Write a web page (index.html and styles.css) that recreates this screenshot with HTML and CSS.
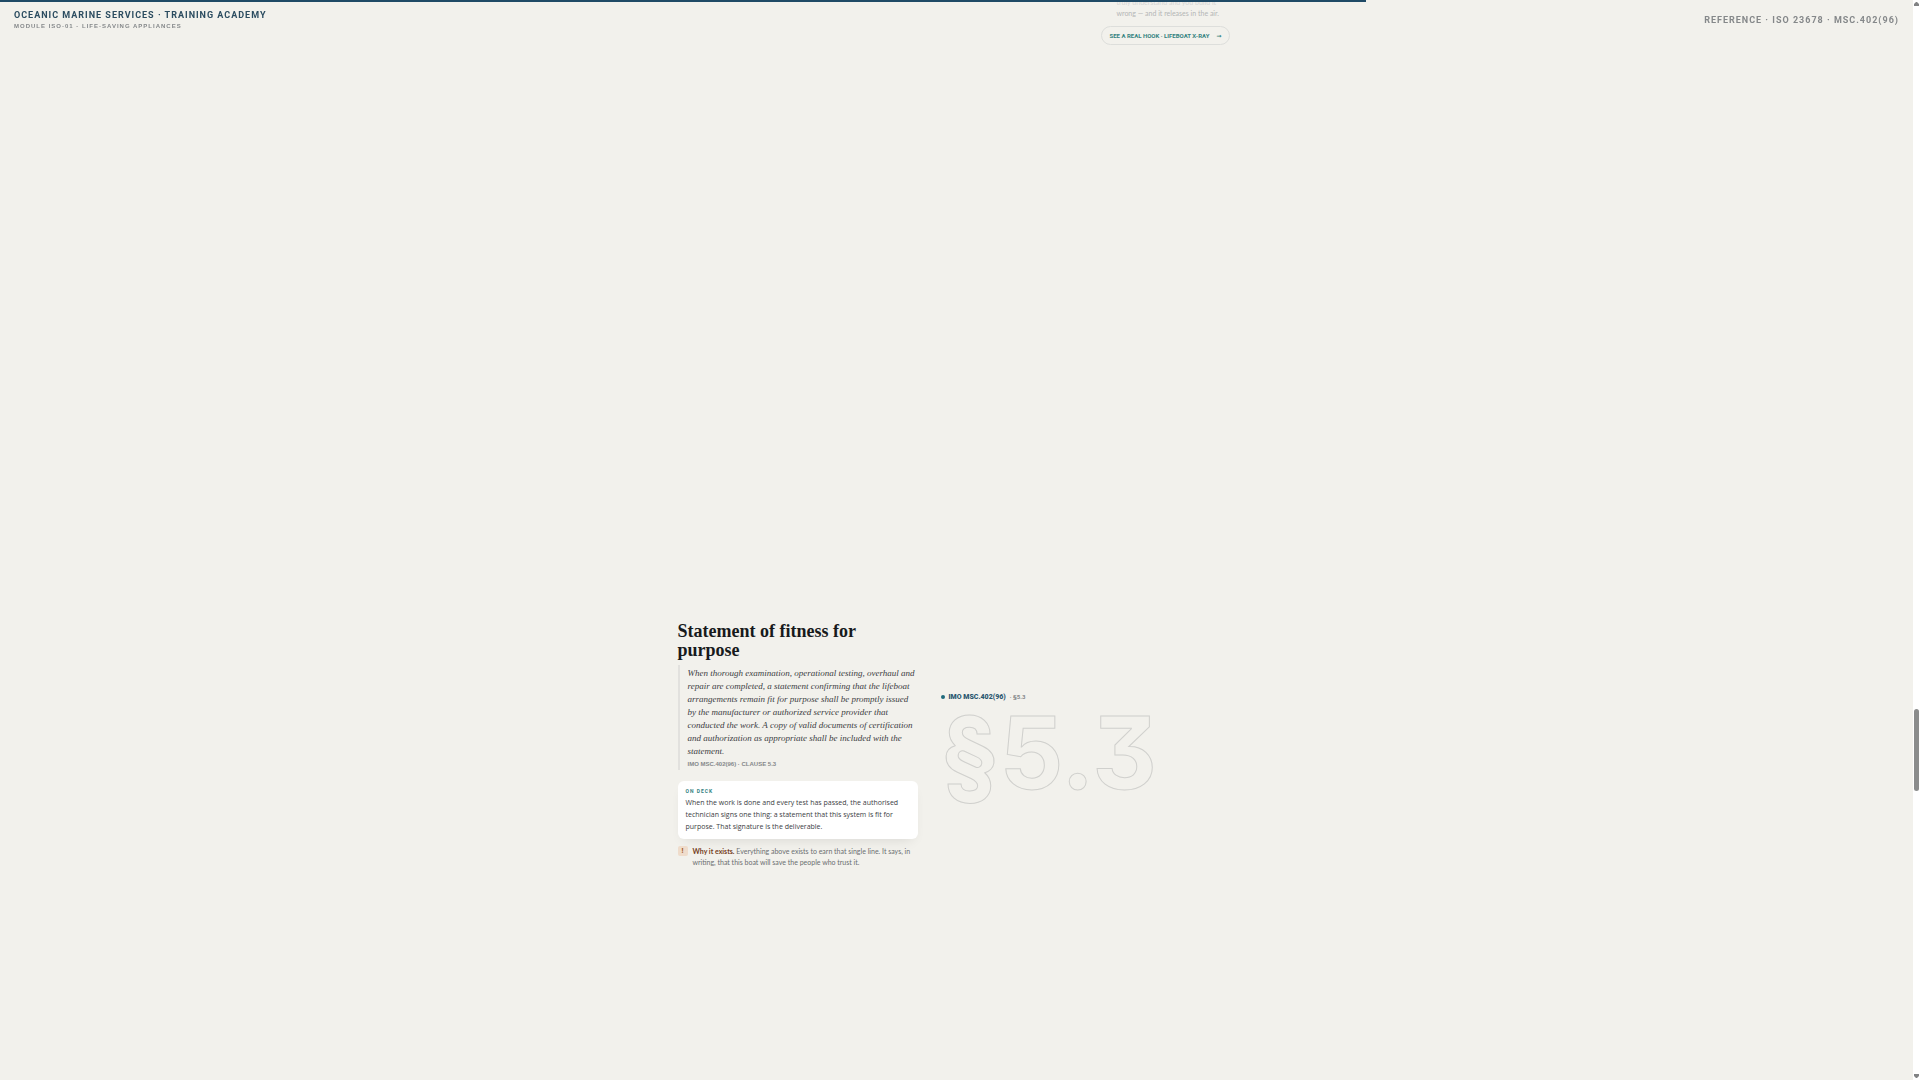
FILE: index.html
```html
<!DOCTYPE html>
<html lang="en">
<head>
<meta charset="utf-8">
<title>Oceanic Marine Services · Training Academy</title>
<link rel="stylesheet" href="styles.css">
</head>
<body>
<div class="progress"><div class="progress-fill"></div></div>
<header class="masthead">
  <div class="brand">
    <p class="brand-name">OCEANIC MARINE SERVICES · TRAINING ACADEMY</p>
    <p class="brand-module">MODULE ISO-01 · LIFE-SAVING APPLIANCES</p>
  </div>
  <p class="reference">REFERENCE · ISO 23678 · MSC.402(96)</p>
</header>
<main class="page">
  <section class="previous">
    <p class="previous-note"><span class="faded">truly understand and you build it</span><br>wrong — and it releases in the air.</p>
    <a class="pill" href="#xray">SEE A REAL HOOK · LIFEBOAT X-RAY <span class="arrow">→</span></a>
  </section>
  <section class="clause">
    <div class="clause-text">
      <h2>Statement of fitness for<br>purpose</h2>
      <blockquote>
        <p>When thorough examination, operational testing, overhaul and<br>repair are completed, a statement confirming that the lifeboat<br>arrangements remain fit for purpose shall be promptly issued<br>by the manufacturer or authorized service provider that<br>conducted the work. A copy of valid documents of certification<br>and authorization as appropriate shall be included with the<br>statement.</p>
        <cite>IMO MSC.402(96) · CLAUSE 5.3</cite>
      </blockquote>
      <div class="card">
        <h3>ON DECK</h3>
        <p>When the work is done and every test has passed, the authorised<br>technician signs one thing: a statement that this system is fit for<br>purpose. That signature is the deliverable.</p>
      </div>
      <div class="why">
        <span class="why-mark">!</span>
        <p><strong>Why it exists.</strong> Everything above exists to earn that single line. It says, in<br>writing, that this boat will save the people who trust it.</p>
      </div>
    </div>
    <div class="clause-figure">
      <p class="source"><span class="dot"></span><b>IMO MSC.402(96)</b><span class="source-clause">· §5.3</span></p>
      <p class="numeral">§5.3</p>
    </div>
  </section>
</main>
<div class="scrollbar">
  <svg viewBox="0 0 7 7"><path d="M1 6V4L3 2h1l2 2v2z"/></svg>
  <div class="track"><div class="thumb"></div></div>
  <svg viewBox="0 0 7 7"><path d="M1 1v2l2 2h1l2-2V1z"/></svg>
</div>
</body>
</html>
```
FILE: styles.css
```css
* { box-sizing: border-box; }
body {
  margin: 0;
  min-height: 100vh;
  padding-right: 7px;
  background: #f2f1ec;
  color: #3c4043;
  font-family: "Open Sans", "Noto Sans", sans-serif;
  overflow: hidden;
}
p, h2, h3, blockquote { margin: 0; }

.progress { position: fixed; z-index: 2; top: 0; left: 0; right: 7px; height: 2px; }
.progress-fill { width: 71.4%; height: 100%; background: #1f4a66; }

.masthead {
  position: fixed;
  top: 0;
  left: 0;
  right: 7px;
  display: flex;
  justify-content: space-between;
  padding: 10px 14px;
  font-family: Roboto, sans-serif;
  font-weight: 700;
}
.brand-name { font-size: 9px; line-height: 10px; letter-spacing: 1px; color: #2b4c60; }
.brand-module { font-family: "Liberation Sans", sans-serif; font-size: 6px; line-height: 12px; letter-spacing: 1px; color: #85888a; }
.reference { font-size: 9px; line-height: 20px; letter-spacing: 1px; color: #85888a; }

.page { display: flow-root; max-width: 558px; margin: 0 auto; }
.previous { display: flex; flex-direction: column; align-items: flex-start; width: 135px; margin: -3px 0 0 auto; }
.previous-note { padding-left: 16px; font: 7px/11px Lato, sans-serif; color: #b4b6b6; white-space: nowrap; }
.faded { color: #d6d6d4; }
.pill {
  display: flex;
  gap: 7px;
  align-items: center;
  height: 19px;
  margin-top: 7px;
  padding: 0 8px;
  border: 1px solid #dddedb;
  border-radius: 10px;
  color: #33827f;
  font: 700 6px Roboto, sans-serif;
  text-decoration: none;
  white-space: nowrap;
}
.arrow { font-family: "DejaVu Sans", sans-serif; }

.clause { display: grid; grid-template-columns: 240px 1fr; gap: 23px; align-items: center; margin-top: 577px; white-space: nowrap; }
.clause h2 { font: 700 18px/19px "Liberation Serif", serif; color: #171a1c; }
blockquote { margin-top: 5px; padding: 2px 0 2px 8px; border-left: 2px solid #e2e1de; }
blockquote p { font: italic 9px/13px "Liberation Serif", serif; }
cite { display: block; margin-top: 2px; font: 700 6px/8px "Liberation Sans", sans-serif; color: #85888a; }
.card { margin-top: 11px; padding: 6px 8px; border-radius: 6px; background: #fff; box-shadow: 0 6px 12px -6px #0000001f; }
.card h3 { margin-bottom: 2px; font: 700 5px/8px Roboto, sans-serif; letter-spacing: 1px; color: #33827f; }
.card p { font-size: 7px; line-height: 12px; }
.why { display: flex; gap: 5px; margin-top: 7px; }
.why-mark { width: 10px; height: 10px; border-radius: 2px; background: #efdccb; color: #a35c2c; font-size: 7px; font-weight: 700; line-height: 10px; text-align: center; }
.why p { font: 7px/11px Lato, sans-serif; color: #6b6e70; }
.why strong { color: #75401c; }

.clause-figure { padding-top: 8px; }
.source { display: flex; align-items: center; gap: 4px; font: 700 7px/8px Roboto, sans-serif; color: #85888a; }
.source b { color: #2b5770; }
.source-clause { font-size: 6px; }
.dot { width: 4px; height: 4px; border-radius: 50%; background: #1f6a7c; }
.numeral {
  font: 700 100px/104px Inter, sans-serif;
  font-feature-settings: "cv09", "ss03";
  color: #f2f1ec;
  -webkit-text-stroke: 1px #d0d0cd;
}

.scrollbar { position: fixed; top: 0; right: 0; bottom: 0; display: flex; flex-direction: column; width: 7px; background: #fff; }
.scrollbar svg { width: 7px; height: 7px; fill: #828384; }
.track { flex: 1; padding: 0 1px; }
.thumb { height: 7.7%; margin-top: 702px; border-radius: 3px; background: #8b8c8c; }
```
